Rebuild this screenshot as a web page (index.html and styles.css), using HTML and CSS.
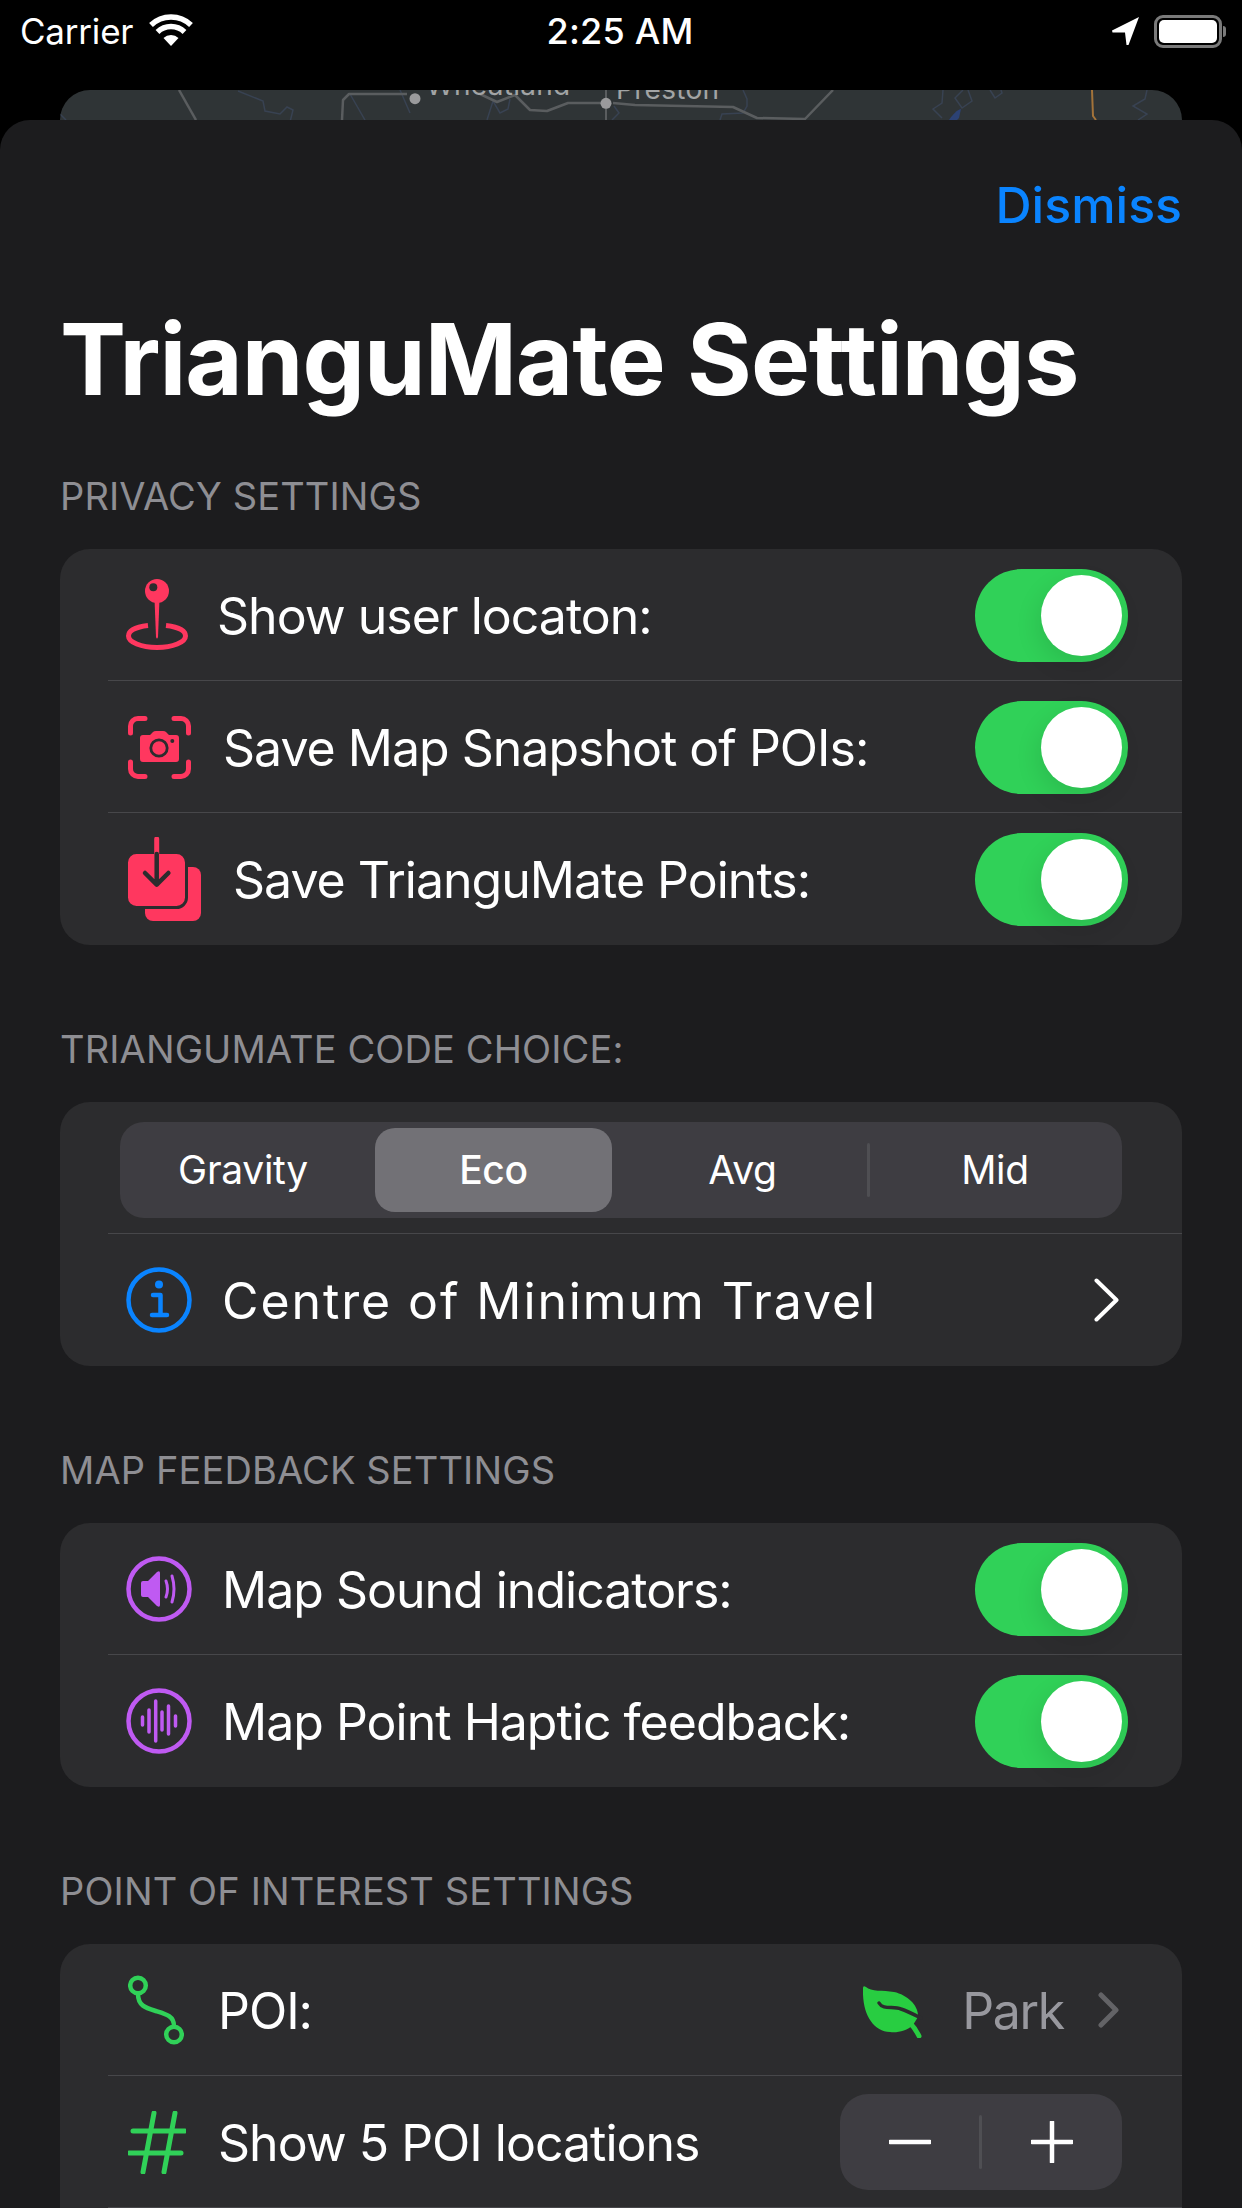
FILE: index.html
```html
<!DOCTYPE html>
<html lang="en">
<head>
<meta charset="utf-8">
<title>TrianguMate Settings</title>
<link rel="stylesheet" href="styles.css">
</head>
<body>
<div class="screen">
  <header class="status">
    <div class="status-left">
      <span class="carrier">Carrier</span>
      <svg class="wifi" viewBox="0 0 46 32"><path d="M23 32 15.500 24a11 11 0 0 1 15 0z" fill="#fff"/><path d="M9.500 18a19.500 19.500 0 0 1 27 0" fill="none" stroke="#fff" stroke-width="5.500"/><path d="M3 11a29 29 0 0 1 40 0" fill="none" stroke="#fff" stroke-width="5.500"/></svg>
    </div>
    <span class="time">2:25 AM</span>
    <div class="status-right">
      <svg class="arrow" viewBox="0 0 28 28"><path d="M27 0 0 13.500l.5 2H13l1.500 12.500h2z" fill="#fff"/></svg>
      <div class="battery"><div class="battery-fill"></div></div>
      <div class="battery-cap"></div>
    </div>
  </header>

  <div class="map-peek">
    <svg class="map" viewBox="0 0 1122 30">
      <g fill="none" stroke="#384252" stroke-width="1.500">
        <path d="M178 1l25 10 2 10 15 3 7-7 6 3-3 12M290 4l15 26M340 0l10 23"/>
        <path d="M427 30l6-19 7 12 8-4 2-10M552 30l7-7-5-7"/>
        <path d="M660 30l2-6 21-1 4-7v-7L683 0"/>
        <path d="M883 0l-1 13-9 6 9 9M903 0l-8 8 7 10 10-7-4-11M930 0l5 8 7-5-1-3"/>
        <path d="M1087 0l-2 9-12 7 14 8-9 6M0 24l6 6"/>
      </g>
      <path d="M889 30c4-6 8-10 12-11l-2 9-2 2z" fill="#2c4274"/>
      <g fill="none" stroke="#5a5d5f" stroke-width="2.500" stroke-linejoin="round">
        <path d="M119 0 136 30"/>
        <path d="M282 30l1-20 6-6h58"/>
        <path d="M420 4l17 8 18-7 15 15 17 1 21-8h34"/>
        <path d="M553 13l22 2 98 2 24 11 48 1 28-29"/>
        <path d="M546 0v30" stroke-width="2"/>
      </g>
      <path d="M1032 0l1 26 3 4" stroke="#a3733a" stroke-width="2" fill="none"/>
      <circle cx="355" cy="8.700" r="5.500" fill="#9a9a9c"/>
      <circle cx="546" cy="13.300" r="5.500" fill="#9a9a9c"/>
      <text class="map-label" x="366" y="4.500">Wheatland</text>
      <text class="map-label" x="556" y="8.700">Preston</text>
    </svg>
  </div>

  <main class="sheet">
    <div class="sheet-top"><span class="dismiss">Dismiss</span></div>
    <h1 class="title">TrianguMate Settings</h1>

    <section class="section">
      <h2 class="label">PRIVACY SETTINGS</h2>
      <div class="card">
        <div class="row">
          <svg class="icon i-pin" viewBox="0 0 64 72"><circle cx="32" cy="12" r="12" fill="#ff375f"/><circle cx="28.300" cy="8.300" r="4" fill="#2c2c2e"/><path d="M29.500 20h5L33 58q-1 3-2 0z" fill="#ff375f"/><path d="M23 46.500C10 48 3.500 52 3.500 57c0 6 12.500 11.500 28.500 11.500S60.500 63 60.500 57c0-5-6.500-9-19.500-10.500" fill="none" stroke="#ff375f" stroke-width="5"/></svg>
          <span class="text">Show user locaton:</span>
          <div class="switch"><div class="knob"></div></div>
        </div>
        <div class="row row-line">
          <svg class="icon i-cam" viewBox="0 0 63 63"><g fill="none" stroke="#ff375f" stroke-width="5" stroke-linecap="round"><path d="M2.500 17V10a7.500 7.500 0 0 1 7.500-7.500h7"/><path d="M46 2.500h7a7.500 7.500 0 0 1 7.500 7.500v7"/><path d="M60.500 46v7a7.500 7.500 0 0 1-7.500 7.500h-7"/><path d="M17 60.500h-7A7.500 7.500 0 0 1 2.500 53v-7"/></g><path d="M15 19h7l3-3q1-1 3-1h7q2 0 3 1l3 3h7q3 0 3 3v21q0 3-3 3H15q-3 0-3-3V22q0-3 3-3z" fill="#ff375f"/><circle cx="31" cy="32" r="8.200" fill="#ff375f" stroke="#2c2c2e" stroke-width="2.800"/><circle cx="44.300" cy="25" r="2" fill="#2c2c2e"/></svg>
          <span class="text">Save Map Snapshot of POIs:</span>
          <div class="switch"><div class="knob"></div></div>
        </div>
        <div class="row row-line">
          <svg class="icon i-save" viewBox="0 0 73 84"><rect x="17" y="30" width="56" height="54" rx="8" fill="#ff375f"/><rect x="-1.500" y="15.500" width="60" height="55" rx="10" fill="#ff375f" stroke="#2c2c2e" stroke-width="3"/><path d="M28.700 2v16" stroke="#ff375f" stroke-width="5" stroke-linecap="round"/><path d="M28.700 17v30M17 36l11.700 11.700L40.400 36" fill="none" stroke="#2c2c2e" stroke-width="4.500" stroke-linecap="round" stroke-linejoin="round"/></svg>
          <span class="text">Save TrianguMate Points:</span>
          <div class="switch"><div class="knob"></div></div>
        </div>
      </div>
    </section>

    <section class="section">
      <h2 class="label">TRIANGUMATE CODE CHOICE:</h2>
      <div class="card">
        <div class="row row-seg">
          <div class="segments">
            <span class="seg seg-first">Gravity</span>
            <span class="seg seg-on">Eco</span>
            <span class="seg seg-third">Avg</span>
            <span class="seg-div"></span>
            <span class="seg seg-last">Mid</span>
          </div>
        </div>
        <div class="row row-line">
          <svg class="icon i-round" viewBox="0 0 66 66"><circle cx="33" cy="33" r="30.500" fill="none" stroke="#0a84ff" stroke-width="4.500"/><circle cx="33" cy="17.500" r="4" fill="#0a84ff"/><path d="M27 28h7.500v20M26 48h15" fill="none" stroke="#0a84ff" stroke-width="4.500" stroke-linecap="round" stroke-linejoin="round"/></svg>
          <span class="text text-wide">Centre of Minimum Travel</span>
          <svg class="chev" viewBox="0 0 25 44"><path d="M2.500 2.500 22.500 22 2.500 41.500" fill="none" stroke="#fff" stroke-width="4" stroke-linecap="round" stroke-linejoin="round"/></svg>
        </div>
      </div>
    </section>

    <section class="section">
      <h2 class="label">MAP FEEDBACK SETTINGS</h2>
      <div class="card">
        <div class="row">
          <svg class="icon i-round" viewBox="0 0 66 66"><circle cx="33" cy="33" r="30.500" fill="none" stroke="#bf5af2" stroke-width="4.500"/><path d="M15 27q0-2 2-2h5l9-9q3-2 3 1v32q0 3-3 1l-9-9h-5q-2 0-2-2z" fill="#bf5af2"/><path d="M40 25q3 8 0 16M46 20q4 13 0 26" fill="none" stroke="#bf5af2" stroke-width="3" stroke-linecap="round"/></svg>
          <span class="text">Map Sound indicators:</span>
          <div class="switch"><div class="knob"></div></div>
        </div>
        <div class="row row-line">
          <svg class="icon i-round" viewBox="0 0 66 66"><circle cx="33" cy="33" r="30.500" fill="none" stroke="#bf5af2" stroke-width="4.500"/><path d="M16.500 29v8M23 22v22M29.700 13v40M36 24v18M42.500 18v28M49.500 28v10" fill="none" stroke="#bf5af2" stroke-width="3.500" stroke-linecap="round"/></svg>
          <span class="text">Map Point Haptic feedback:</span>
          <div class="switch"><div class="knob"></div></div>
        </div>
      </div>
    </section>

    <section class="section">
      <h2 class="label">POINT OF INTEREST SETTINGS</h2>
      <div class="card">
        <div class="row">
          <svg class="icon i-route" viewBox="0 0 56 70"><g fill="none" stroke="#30d158" stroke-width="4.500"><circle cx="10" cy="10.500" r="7.800"/><circle cx="46" cy="59.500" r="7.800"/><path d="M10 19c0 12 8 14 18 17 10 3 18 5 18 15" stroke-linecap="round"/></g></svg>
          <span class="text">POI:</span>
          <svg class="leaf" viewBox="0 0 61 52"><path d="M0 2Q0-1 3 1C8 6 20 4 31 6 45 9 56 20 55 31L50 39C44 45 34 47 27 46 10 45-1 28 0 2Z" fill="#28cd41"/><path d="M16 17C20 24 30 20 38 23 44 25 50 28 58 32" fill="none" stroke="#2c2c2e" stroke-width="3.500" stroke-linecap="round"/><path d="M47 37C51 41 54 46 56 50" fill="none" stroke="#28cd41" stroke-width="5" stroke-linecap="round"/></svg>
          <span class="park">Park</span>
          <svg class="chev-small" viewBox="0 0 21 36"><path d="M3 3 18 18 3 33" fill="none" stroke="#636366" stroke-width="5" stroke-linecap="round" stroke-linejoin="round"/></svg>
        </div>
        <div class="row row-line">
          <svg class="icon i-hash" viewBox="0 0 58 63"><path d="M5 20h52M1 42h52M26 2l-11 59M47 2 36 61" fill="none" stroke="#30d158" stroke-width="5" stroke-linecap="round"/></svg>
          <span class="text">Show 5 POI locations</span>
          <div class="stepper">
            <svg class="step-icon" viewBox="0 0 42 42"><path d="M1 21h40" stroke="#fff" stroke-width="4.500" stroke-linecap="round"/></svg>
            <span class="step-div"></span>
            <svg class="step-icon" viewBox="0 0 42 42"><path d="M1 21h40M21 1v40" stroke="#fff" stroke-width="4.500" stroke-linecap="round"/></svg>
          </div>
        </div>
        <div class="row row-line"></div>
      </div>
    </section>
  </main>
</div>
</body>
</html>
```
FILE: styles.css
```css
* { box-sizing: border-box; }
html, body { margin: 0; padding: 0; background: #000; }
.screen {
  width: 1242px;
  height: 2208px;
  overflow: hidden;
  background: #000;
  font-family: Inter, "Liberation Sans", sans-serif;
  color: #fff;
}
.status {
  height: 90px;
  padding: 14px 16px 0 20px;
  display: grid;
  grid-template-columns: 1fr auto 1fr;
  align-items: start;
}
.status-left { display: flex; align-items: center; gap: 15px; height: 34px; }
.carrier { font-size: 35px; line-height: 34px; letter-spacing: -0.2px; }
.wifi { width: 46px; height: 32px; margin-top: -3px; }
.time { font-size: 36px; line-height: 34px; font-weight: 500; letter-spacing: 0.2px; margin-left: -6px; }
.status-right { display: flex; align-items: center; justify-content: flex-end; height: 34px; }
.arrow { width: 28px; height: 28px; margin-right: 14px; }
.battery {
  width: 68px; height: 33px;
  border: 3px solid #7a7a7a;
  border-radius: 9px;
  padding: 2px;
}
.battery-fill { height: 100%; background: #fff; border-radius: 5px; }
.battery-cap { width: 3px; height: 11px; background: #7a7a7a; border-radius: 0 3px 3px 0; margin-left: 1px; }
.map-peek {
  height: 30px;
  margin: 0 60px;
  background: #2f3436;
  border-radius: 30px 30px 0 0;
  overflow: hidden;
}
.map { display: block; width: 1122px; height: 30px; }
.map-label { font-size: 28px; letter-spacing: 0.3px; fill: #a2a4a5; font-family: Inter, sans-serif; }

.sheet {
  background: #1c1c1e;
  border-radius: 30px 30px 0 0;
  padding: 0 60px;
  height: 2088px;
}
.sheet-top {
  display: flex;
  justify-content: flex-end;
  padding-top: 55px;
}
.dismiss {
  font-size: 50px;
  line-height: 60px;
  font-weight: 500;
  color: #0a84ff;
}
.title {
  margin: 64px 0 53px;
  font-size: 99px;
  line-height: 120px;
  font-weight: 700;
  letter-spacing: -1px;
}
.section { margin-bottom: 80px; }
.label {
  margin: 0 0 29px;
  font-size: 38px;
  line-height: 48px;
  font-weight: 400;
  letter-spacing: 0.12px;
  color: #8e8e93;
}
.card {
  background: #2c2c2e;
  border-radius: 30px;
  padding-bottom: 1px;
}
.row {
  height: 132px;
  margin-left: 48px;
  padding: 1px 54px 0 18px;
  display: flex;
  align-items: center;
}
.row:first-child { height: 131px; }
.row-line { border-top: 1px solid #47474a; }
.row-seg { margin: 0; align-items: flex-start; padding: 20px 60px 0; }
.icon { flex: none; display: block; }
.text {
  font-size: 50px;
  line-height: 60px;
  letter-spacing: -1px;
  flex: 1;
  white-space: nowrap;
  padding-top: 2px;
}
.text-wide { letter-spacing: 1.9px; }
.i-pin { width: 64px; height: 72px; margin-right: 28px; margin-left: -1px; }
.i-cam { width: 63px; height: 63px; margin-left: 2px; margin-right: 32px; }
.i-save { width: 73px; height: 84px; margin-left: 2px; margin-right: 32px; }
.i-round { width: 66px; height: 66px; margin-right: 30px; margin-left: 0; }
.i-route { width: 56px; height: 70px; margin-left: 2px; margin-right: 34px; }
.i-hash { width: 58px; height: 63px; margin-left: 2px; margin-right: 32px; }

.switch {
  flex: none;
  width: 153px;
  height: 93px;
  border-radius: 47px;
  background: #30d158;
  padding: 6px;
  display: flex;
  justify-content: flex-end;
}
.knob {
  width: 81px;
  height: 81px;
  border-radius: 50%;
  background: #fff;
  box-shadow: -3px 9px 24px rgba(0, 0, 0, 0.1);
}
.segments {
  width: 1002px;
  height: 96px;
  background: #3e3d42;
  border-radius: 24px;
  padding: 6px;
  display: grid;
  grid-template-columns: 249px 237px 255px 3px 1fr;
  align-items: center;
}
.seg {
  text-align: center;
  font-size: 39px;
  line-height: 84px;
  height: 84px;
  letter-spacing: -0.3px;
}
.seg-first { padding-right: 15px; }
.seg-third { padding-left: 6px; }
.seg-last { padding-left: 4px; }
.seg-on {
  background: #727176;
  border-radius: 20px;
  font-weight: 500;
}
.seg-div { width: 3px; height: 54px; background: #4f4f53; border-radius: 2px; }
.chev { width: 25px; height: 44px; flex: none; margin-right: 9px; }
.leaf { width: 61px; height: 52px; flex: none; margin: 3px 38px 0 0; }
.park { font-size: 50px; line-height: 60px; letter-spacing: -1.3px; color: #98989e; margin-right: 34px; padding-top: 2px; }
.chev-small { width: 21px; height: 36px; flex: none; margin-right: 9px; }
.stepper {
  flex: none;
  width: 282px;
  height: 96px;
  margin-right: 6px;
  background: #3e3d42;
  border-radius: 28px;
  display: grid;
  grid-template-columns: 139px 3px 1fr;
  align-items: center;
  justify-items: center;
}
.step-icon { width: 42px; height: 42px; display: block; }
.step-div { width: 3px; height: 54px; background: #4f4f53; border-radius: 2px; }
```
